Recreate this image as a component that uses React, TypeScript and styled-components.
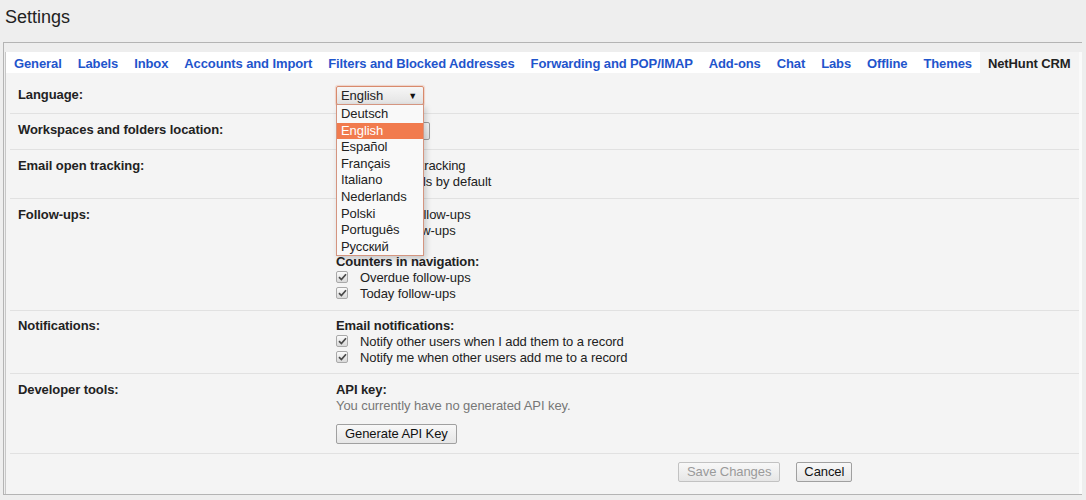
import React from 'react';
import styled, { createGlobalStyle } from 'styled-components';

const GlobalStyle = createGlobalStyle`
  html, body {
    margin: 0;
    padding: 0;
    background: #eeeeee;
  }
  body {
    font-family: "Liberation Sans", Arial, sans-serif;
    font-size: 13px;
    letter-spacing: -0.08px;
    color: #222;
  }
`;

const Page = styled.div`
  width: 1086px;
  height: 500px;
  overflow: hidden;
`;

const Header = styled.h1`
  margin: 0;
  height: 42px;
  padding: 5px 0 0 5px;
  box-sizing: border-box;
  font-size: 18px;
  font-weight: normal;
  line-height: 24px;
  letter-spacing: 0;
  color: #222;
`;

const Frame = styled.div`
  margin: 0 4px 0 3px;
  padding: 9px 0 0 1px;
  border-top: 1px solid #b4b4b4;
  border-left: 1px solid #b4b4b4;
  border-bottom: 1px solid #b4b4b4;
`;

const Panel = styled.div`
  background: #f4f4f4;
  border-left: 1px solid #c8c8c8;
  border-right: 3px solid #fafafa;
`;

const TabBar = styled.div`
  display: flex;
  height: 21px;
  background: #fff;
`;

const Tab = styled.span<{ $active?: boolean }>`
  box-sizing: border-box;
  height: 21px;
  padding: 2px 8px 0;
  font-weight: bold;
  line-height: 19px;
  letter-spacing: -0.11px;
  color: ${(p) => (p.$active ? '#222' : '#1f55cc')};
  background: ${(p) => (p.$active ? '#f4f4f4' : 'transparent')};
  white-space: nowrap;
`;

const Row = styled.div<{ $pt: number; $pb: number; $first?: boolean }>`
  display: grid;
  grid-template-columns: 326px 1fr;
  margin-left: 4px;
  padding: ${(p) => p.$pt}px 0 ${(p) => p.$pb}px;
  border-top: ${(p) => (p.$first ? 'none' : '1px solid #e1e1e1')};
`;

const Label = styled.div<{ $lh?: number }>`
  padding-left: 8px;
  font-weight: bold;
  line-height: ${(p) => p.$lh ?? 16}px;
`;

const Field = styled.div`
  line-height: 16px;
`;

const Group = styled.div<{ $gap?: number }>`
  margin-top: ${(p) => p.$gap ?? 0}px;
`;

const Heading = styled.div`
  font-weight: bold;
  line-height: 16px;
`;

const Hint = styled.div`
  color: #777;
  line-height: 16px;
`;

const CheckLine = styled.label`
  display: flex;
  align-items: flex-start;
  gap: 12px;
  line-height: 16px;
  white-space: nowrap;
`;

const Box = styled.span`
  display: inline-flex;
  align-items: center;
  justify-content: center;
  width: 10px;
  height: 10px;
  margin-top: 1px;
  border: 1px solid #a9a9a9;
  border-radius: 2px;
  background: linear-gradient(#fbfbfb, #d9d9d9);
`;

const SelectWrap = styled.div`
  position: relative;
  width: 88px;
`;

const SelectBox = styled.div<{ $focus?: boolean; $w: number; $h: number }>`
  display: flex;
  align-items: center;
  justify-content: space-between;
  box-sizing: border-box;
  width: ${(p) => p.$w}px;
  height: ${(p) => p.$h}px;
  padding: 0 6px 0 4px;
  border: 1px solid ${(p) => (p.$focus ? '#d88a6c' : '#9c9c9c')};
  border-radius: 2px;
  background: linear-gradient(#f6f6f6, #e3e3e3);
  box-shadow: ${(p) => (p.$focus ? '0 0 1px 1px rgba(230, 150, 120, 0.35)' : 'none')};
  line-height: 16px;
`;

const Arrow = styled.span`
  font-size: 9px;
  color: #111;
`;

const DropList = styled.ul`
  position: absolute;
  z-index: 5;
  top: 18px;
  left: 0;
  width: 88px;
  box-sizing: border-box;
  margin: 0;
  padding: 1px 0 0;
  list-style: none;
  background: #f9f9f9;
  border: 1px solid #d49580;
  box-shadow: 2px 3px 6px rgba(0, 0, 0, 0.18);
`;

const DropItem = styled.li<{ $selected?: boolean }>`
  height: 16.6px;
  line-height: 16.6px;
  padding-left: 4px;
  color: ${(p) => (p.$selected ? '#fff' : '#222')};
  background: ${(p) => (p.$selected ? '#f17b4e' : 'transparent')};
`;

const Button = styled.button<{ $disabled?: boolean; $px: number }>`
  height: 20px;
  padding: 0 ${(p) => p.$px}px;
  font-family: "Liberation Sans", Arial, sans-serif;
  font-size: 13px;
  letter-spacing: -0.08px;
  line-height: 18px;
  color: ${(p) => (p.$disabled ? '#9a9a9a' : '#111')};
  border: 1px solid ${(p) => (p.$disabled ? '#c2c2c2' : '#a0a0a0')};
  border-radius: 2px;
  background: linear-gradient(#f8f8f8, #e6e6e6);
`;

const KeyButton = styled(Button)`
  margin-top: 10px;
`;

const Actions = styled.div`
  display: flex;
  gap: 16px;
  margin-left: 4px;
  padding: 8px 0 12px 668px;
  border-top: 1px solid #e1e1e1;
`;

const languages = [
  'Deutsch',
  'English',
  'Español',
  'Français',
  'Italiano',
  'Nederlands',
  'Polski',
  'Português',
  'Русский',
];

const tabs = [
  'General',
  'Labels',
  'Inbox',
  'Accounts and Import',
  'Filters and Blocked Addresses',
  'Forwarding and POP/IMAP',
  'Add-ons',
  'Chat',
  'Labs',
  'Offline',
  'Themes',
  'NetHunt CRM',
];

const Check: React.FC<{ text: string }> = ({ text }) => (
  <CheckLine>
    <Box>
      <svg width="9" height="8" viewBox="0 0 9 8">
        <path d="M1 4.2 L3.4 6.6 L8 1.2" fill="none" stroke="#4a4a4a" strokeWidth="1.7" />
      </svg>
    </Box>
    <span>{text}</span>
  </CheckLine>
);

export default function App() {
  return (
    <Page>
      <GlobalStyle />
      <Header>Settings</Header>
      <Frame>
        <Panel>
          <TabBar>
            {tabs.map((t) => (
              <Tab key={t} $active={t === 'NetHunt CRM'}>
                {t}
              </Tab>
            ))}
          </TabBar>

          <Row $first $pt={13} $pb={8}>
            <Label $lh={18}>Language:</Label>
            <Field>
              <SelectWrap>
                <SelectBox $focus $w={88} $h={19}>
                  <span>English</span>
                  <Arrow>▼</Arrow>
                </SelectBox>
                <DropList>
                  {languages.map((l) => (
                    <DropItem key={l} $selected={l === 'English'}>
                      {l}
                    </DropItem>
                  ))}
                </DropList>
              </SelectWrap>
            </Field>
          </Row>

          <Row $pt={8} $pb={9}>
            <Label>Workspaces and folders location:</Label>
            <Field>
              <SelectBox $w={94} $h={18}>
                <span>My Drive</span>
                <Arrow>▼</Arrow>
              </SelectBox>
            </Field>
          </Row>

          <Row $pt={8} $pb={8}>
            <Label>Email open tracking:</Label>
            <Field>
              <Check text="Use email tracking" />
              <Check text="Track emails by default" />
            </Field>
          </Row>

          <Row $pt={8} $pb={8}>
            <Label>Follow-ups:</Label>
            <Field>
              <Group>
                <Check text="Overdue follow-ups" />
                <Check text="Today follow-ups" />
              </Group>
              <Group $gap={15}>
                <Heading>Counters in navigation:</Heading>
                <Check text="Overdue follow-ups" />
                <Check text="Today follow-ups" />
              </Group>
            </Field>
          </Row>

          <Row $pt={7} $pb={7}>
            <Label>Notifications:</Label>
            <Field>
              <Heading>Email notifications:</Heading>
              <Check text="Notify other users when I add them to a record" />
              <Check text="Notify me when other users add me to a record" />
            </Field>
          </Row>

          <Row $pt={8} $pb={9}>
            <Label>Developer tools:</Label>
            <Field>
              <Heading>API key:</Heading>
              <Hint>You currently have no generated API key.</Hint>
              <KeyButton $px={8}>Generate API Key</KeyButton>
            </Field>
          </Row>

          <Actions>
            <Button $disabled $px={8}>
              Save Changes
            </Button>
            <Button $px={7}>Cancel</Button>
          </Actions>
        </Panel>
      </Frame>
    </Page>
  );
}
